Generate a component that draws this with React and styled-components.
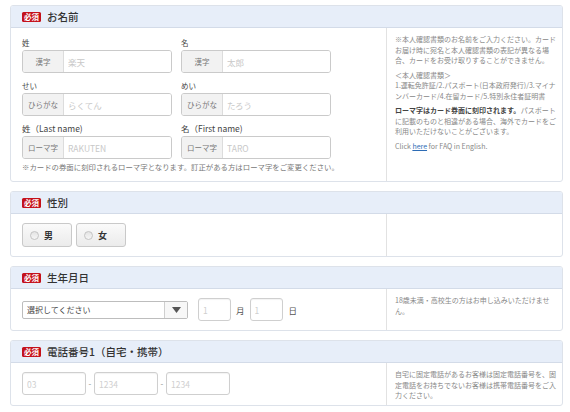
import styled, { createGlobalStyle } from 'styled-components';

const GlobalStyle = createGlobalStyle`
  body {
    margin: 0;
    background: #fff;
    font-family: "Noto Sans CJK JP", "Noto Sans", sans-serif;
    color: #333;
  }
`;

const nameFields = [
  { label: '姓', prefix: '漢字', placeholder: '楽天' },
  { label: '名', prefix: '漢字', placeholder: '太郎' },
  { label: 'せい', prefix: 'ひらがな', placeholder: 'らくてん' },
  { label: 'めい', prefix: 'ひらがな', placeholder: 'たろう' },
  { label: '姓（Last name)', prefix: 'ローマ字', placeholder: 'RAKUTEN', big: true },
  { label: '名（First name)', prefix: 'ローマ字', placeholder: 'TARO', big: true },
];

function Section({ title, side, children }) {
  return (
    <Card>
      <Header>
        <Badge>必須</Badge>
        <Title>{title}</Title>
      </Header>
      <Body>
        <Main>{children}</Main>
        <Side>{side}</Side>
      </Body>
    </Card>
  );
}

function Arrow() {
  return (
    <svg width="9" height="6" viewBox="0 0 9 6">
      <polygon points="0,0 9,0 4.5,6" fill="#555" />
    </svg>
  );
}

export default function App() {
  return (
    <Page>
      <GlobalStyle />
      <Section
        title="お名前"
        side={
          <>
            <Note>※本人確認書類のお名前をご入力ください。カードお届け時に宛名と本人確認書類の表記が異なる場合、カードをお受け取りすることができません。</Note>
            <Note>＜本人確認書類＞<br />1.運転免許証/2.パスポート(日本政府発行)/3.マイナンバーカード/4.在留カード/5.特別永住者証明書</Note>
            <Note><Strong>ローマ字はカード券面に刻印されます。</Strong>パスポートに記載のものと相違がある場合、海外でカードをご利用いただけないことがございます。</Note>
            <Note>Click <Link href="#">here</Link> for FAQ in English.</Note>
          </>
        }
      >
        <NameGrid>
          {nameFields.map((f) => (
            <Field key={f.label}>
              <Label $big={f.big}>{f.label}</Label>
              <InputGroup>
                <Prefix>{f.prefix}</Prefix>
                <TextInput placeholder={f.placeholder} />
              </InputGroup>
            </Field>
          ))}
        </NameGrid>
        <Hint>※カードの券面に刻印されるローマ字となります。訂正がある方はローマ字をご変更ください。</Hint>
      </Section>

      <Section title="性別">
        <Row>
          <RadioButton><Dot />男</RadioButton>
          <RadioButton><Dot />女</RadioButton>
        </Row>
      </Section>

      <Section
        title="生年月日"
        side={<Note>18歳未満・高校生の方はお申し込みいただけません。</Note>}
      >
        <Row>
          <Select>
            <SelectText>選択してください</SelectText>
            <SelectArrow><Arrow /></SelectArrow>
          </Select>
          <SmallInput placeholder="1" $width={33} $ml={10} />
          <Unit>月</Unit>
          <SmallInput placeholder="1" $width={33} />
          <Unit $ml={6}>日</Unit>
        </Row>
      </Section>

      <Section
        title="電話番号1（自宅・携帯）"
        side={<Note>自宅に固定電話があるお客様は固定電話番号を、固定電話をお持ちでないお客様は携帯電話番号をご入力ください。</Note>}
      >
        <Row>
          <SmallInput placeholder="03" $width={64} />
          <Dash>-</Dash>
          <SmallInput placeholder="1234" $width={64} />
          <Dash>-</Dash>
          <SmallInput placeholder="1234" $width={64} />
        </Row>
      </Section>
    </Page>
  );
}

const Page = styled.div`
  padding: 5px 7px 0 10px;
  width: 553px;
`;

const Card = styled.section`
  border: 1px solid #dde2ea;
  border-radius: 3px;
  margin-bottom: 9px;
  overflow: hidden;
`;

const Header = styled.div`
  height: 21px;
  display: flex;
  align-items: center;
  gap: 6px;
  padding-left: 11px;
  background: #e7eef9;
  border-bottom: 1px solid #d3dbe8;
`;

const Badge = styled.span`
  background: #c4111b;
  color: #fff;
  font-size: 7.5px;
  font-weight: bold;
  line-height: 10px;
  height: 10px;
  padding: 0 2px;
  border-radius: 1.5px;
`;

const Title = styled.h2`
  margin: 0;
  font-size: 10.5px;
  line-height: 14px;
  font-weight: 500;
  color: #333;
`;

const Body = styled.div`
  display: grid;
  grid-template-columns: 375px 1fr;
`;

const Main = styled.div`
  padding: 9px 11px 9px;
  display: flex;
  flex-direction: column;
  justify-content: center;
`;

const Side = styled.div`
  border-left: 1px solid #e2e2e2;
  padding: 6px 6px 4px 8px;
`;

const Note = styled.p`
  margin: 0 0 4px;
  font-size: 7px;
  line-height: 10.5px;
  color: #888;

  &:last-child {
    margin-bottom: 0;
  }
`;

const Strong = styled.strong`
  color: #444;
  margin-right: 0.5px;
`;

const Link = styled.a`
  color: #2d6cb5;
  text-decoration: underline;
`;

const NameGrid = styled.div`
  display: grid;
  grid-template-columns: 150px 150px;
  column-gap: 9px;
  row-gap: 7px;
`;

const Field = styled.div`
  display: flex;
  flex-direction: column;
  gap: 2px;
`;

const Label = styled.label`
  font-size: ${(p) => (p.$big ? '8.5px' : '7.5px')};
  line-height: 11px;
  color: #444;
`;

const InputGroup = styled.div`
  display: flex;
  height: 23px;
  border: 1px solid #cacaca;
  border-radius: 3px;
  box-sizing: border-box;
  overflow: hidden;
  box-shadow: inset 0 1px 1px rgba(0, 0, 0, 0.05);
`;

const Prefix = styled.span`
  width: 40px;
  flex: none;
  display: flex;
  align-items: center;
  justify-content: center;
  background: #f2f2f2;
  border-right: 1px solid #dcdcdc;
  font-size: 7.5px;
  color: #777;
`;

const TextInput = styled.input`
  flex: 1;
  min-width: 0;
  border: none;
  outline: none;
  padding: 0 4px;
  font-family: inherit;
  font-size: 8.5px;
  color: #333;

  &::placeholder {
    color: #c8c8c8;
  }
`;

const Hint = styled.p`
  margin: 3px 0 0;
  font-size: 7.4px;
  line-height: 10px;
  color: #777;
`;

const Row = styled.div`
  display: flex;
  align-items: center;
`;

const RadioButton = styled.label`
  width: 50px;
  height: 24px;
  box-sizing: border-box;
  margin-right: 4px;
  display: flex;
  align-items: center;
  padding-left: 7px;
  gap: 5px;
  border: 1px solid #c9c9c9;
  border-radius: 3px;
  background: linear-gradient(#fafafa, #ebebeb);
  font-size: 9px;
  font-weight: bold;
  color: #333;
`;

const Dot = styled.span`
  width: 7px;
  height: 7px;
  border-radius: 50%;
  border: 1px solid #c4c4c4;
  background: linear-gradient(#e4e4e4, #f6f6f6);
`;

const Select = styled.div`
  width: 166px;
  height: 18px;
  box-sizing: border-box;
  display: flex;
  border: 1px solid #bdbdbd;
  border-radius: 2px;
  background: #fff;
`;

const SelectText = styled.span`
  flex: 1;
  display: flex;
  align-items: center;
  padding-left: 4px;
  font-size: 8px;
  color: #444;
`;

const SelectArrow = styled.span`
  width: 22px;
  display: flex;
  align-items: center;
  justify-content: center;
  border-left: 1px solid #cfcfcf;
  background: #f7f7f7;
`;

const SmallInput = styled.input`
  width: ${(p) => p.$width}px;
  height: 23px;
  box-sizing: border-box;
  margin-left: ${(p) => p.$ml || 0}px;
  border: 1px solid #cfcfcf;
  border-radius: 3px;
  padding: 0 4px;
  font-family: inherit;
  font-size: 8.5px;
  outline: none;
  box-shadow: inset 0 1px 1px rgba(0, 0, 0, 0.05);

  &::placeholder {
    color: #cfcfcf;
  }
`;

const Unit = styled.span`
  font-size: 8.5px;
  color: #555;
  margin: 0 ${(p) => (p.$ml ? 0 : 5)}px 0 ${(p) => p.$ml || 5}px;
`;

const Dash = styled.span`
  width: 8px;
  text-align: center;
  font-size: 8px;
  color: #888;
`;
